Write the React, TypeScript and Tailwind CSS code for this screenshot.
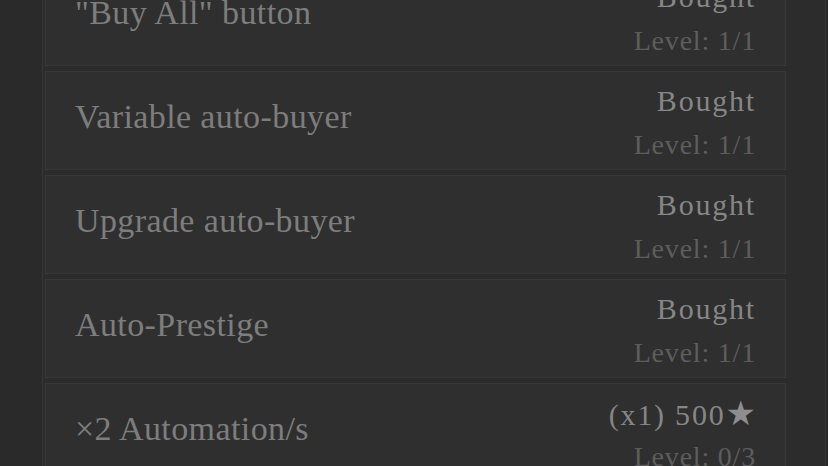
import React from "react";

type Item = { title: string; cost: React.ReactNode; level: string };

const items: Item[] = [
  { title: "\"Buy All\" button", cost: "Bought", level: "Level: 1/1" },
  { title: "Variable auto-buyer", cost: "Bought", level: "Level: 1/1" },
  { title: "Upgrade auto-buyer", cost: "Bought", level: "Level: 1/1" },
  { title: "Auto-Prestige", cost: "Bought", level: "Level: 1/1" },
  {
    title: "×2 Automation/s",
    cost: (
      <>
        (x1) 500<span className="text-[#8e8e8e] tracking-normal text-[34px]" style={{ fontFamily: "'DejaVu Sans', sans-serif" }}>★</span>
      </>
    ),
    level: "Level: 0/3",
  },
];

export default function App() {
  return (
    <div
      className="w-[828px] h-[466px] overflow-hidden bg-[#2a2a2a] flex"
      style={{ fontFamily: "'Liberation Serif', 'DejaVu Serif', serif" }}
    >
      <div className="ml-[42px] w-[784px] h-full border-l border-r border-[#363636] bg-[#2c2c2c]">
        <div className="mt-[-33px] ml-[2px] w-[741px] flex flex-col gap-[5px]">
          {items.map((it, i) => (
            <div
              key={i}
              className="h-[99px] border border-[#393939] bg-[#2f2f2f] flex items-start justify-between pl-[29px] pr-[29px]"
            >
              <div className="mt-[25px] text-[34px] leading-[40px] tracking-[0.4px] text-[#7d7d7d] whitespace-nowrap">
                {it.title}
              </div>
              <div className="pt-[11px] flex flex-col items-end">
                <div className="h-[36px] text-[30px] leading-[36px] tracking-[1.8px] text-[#868686] whitespace-nowrap">
                  {it.cost}
                </div>
                <div className="mt-[8px] text-[28px] leading-[36px] tracking-[0.8px] text-[#5d5d5d] whitespace-nowrap">
                  {it.level}
                </div>
              </div>
            </div>
          ))}
        </div>
      </div>
    </div>
  );
}
